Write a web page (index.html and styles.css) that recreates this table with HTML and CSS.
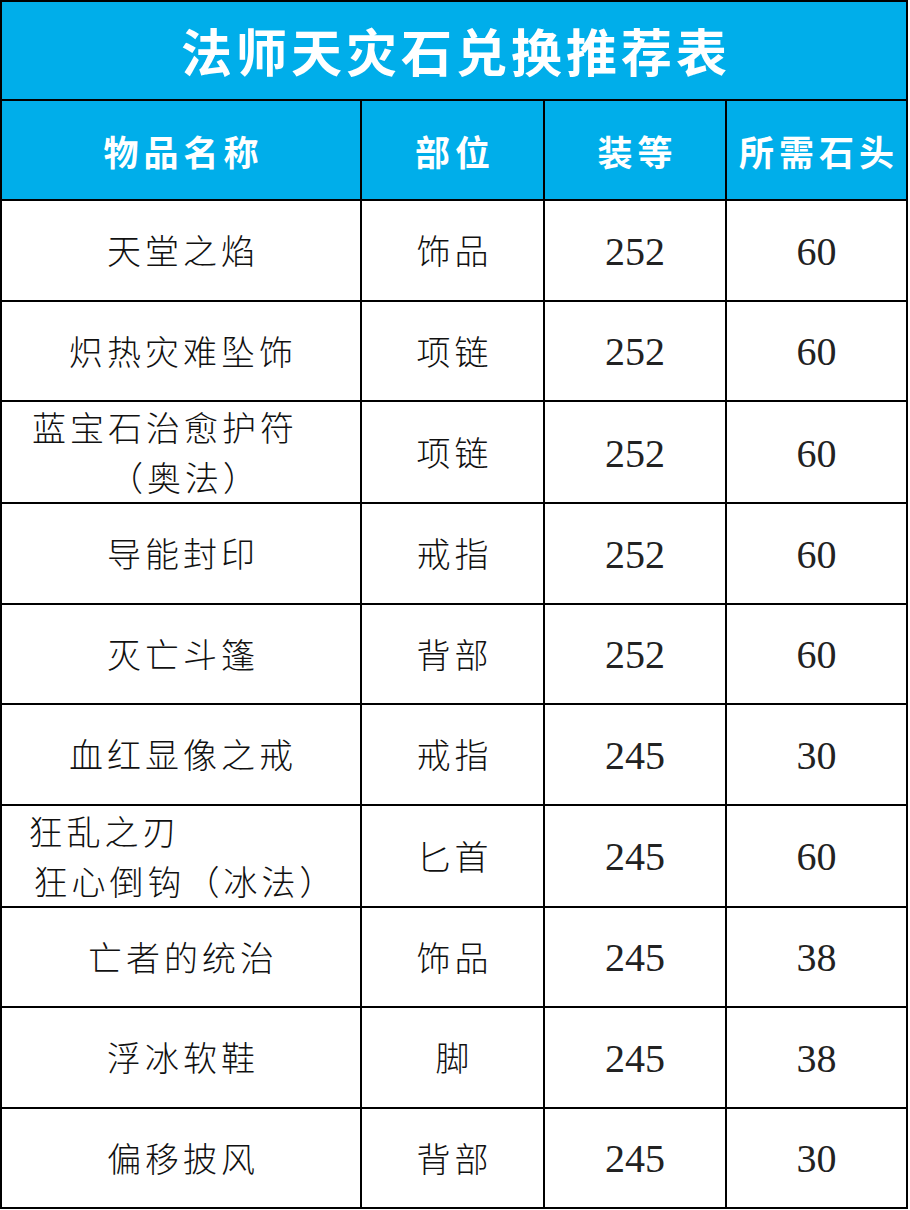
FILE: index.html
```html
<!DOCTYPE html>
<html lang="zh-CN">
<head>
<meta charset="utf-8">
<title>法师天灾石兑换推荐表</title>
<link rel="stylesheet" href="styles.css">
</head>
<body>
<div class="sheet">
  <div class="title">法师天灾石兑换推荐表</div>
  <div class="hd">物品名称</div>
  <div class="hd">部位</div>
  <div class="hd">装等</div>
  <div class="hd">所需石头</div>

  <div class="cell name">天堂之焰</div><div class="cell">饰品</div><div class="cell num">252</div><div class="cell num">60</div>
  <div class="cell name">炽热灾难坠饰</div><div class="cell">项链</div><div class="cell num">252</div><div class="cell num">60</div>
  <div class="cell name"><div class="two center"><span class="l1">蓝宝石治愈护符</span><span class="l2">（奥法）</span></div></div><div class="cell">项链</div><div class="cell num">252</div><div class="cell num">60</div>
  <div class="cell name">导能封印</div><div class="cell">戒指</div><div class="cell num">252</div><div class="cell num">60</div>
  <div class="cell name">灭亡斗篷</div><div class="cell">背部</div><div class="cell num">252</div><div class="cell num">60</div>
  <div class="cell name">血红显像之戒</div><div class="cell">戒指</div><div class="cell num">245</div><div class="cell num">30</div>
  <div class="cell name"><div class="two left"><span>狂乱之刃</span><span class="ind">狂心倒钩（冰法）</span></div></div><div class="cell">匕首</div><div class="cell num">245</div><div class="cell num">60</div>
  <div class="cell name">亡者的统治</div><div class="cell">饰品</div><div class="cell num">245</div><div class="cell num">38</div>
  <div class="cell name">浮冰软鞋</div><div class="cell">脚</div><div class="cell num">245</div><div class="cell num">38</div>
  <div class="cell name">偏移披风</div><div class="cell">背部</div><div class="cell num">245</div><div class="cell num">30</div>
</div>
</body>
</html>
```
FILE: styles.css
```css
html, body {
  margin: 0;
  padding: 0;
  background: #ffffff;
}
.sheet {
  box-sizing: border-box;
  width: 908px;
  height: 1209px;
  border: 2px solid #000;
  background: #000;
  display: grid;
  grid-template-columns: 358px 181px 180px 1fr;
  grid-template-rows: 97px 98px repeat(10, 1fr);
  gap: 2px;
  font-family: "Noto Sans CJK SC", "Noto Sans", sans-serif;
}
.title {
  grid-column: 1 / -1;
  background: #00aeea;
  color: #fff;
  font-size: 51px;
  font-weight: 700;
  letter-spacing: 4px;
  padding-left: 4px;
  display: flex;
  align-items: center;
  justify-content: center;
  line-height: 1;
}
.hd {
  background: #00aeea;
  color: #fff;
  font-size: 35px;
  font-weight: 700;
  letter-spacing: 5px;
  padding-left: 5px;
  display: flex;
  align-items: center;
  justify-content: center;
  line-height: 1;
}
.cell {
  background: #fff;
  color: #111;
  font-size: 34px;
  font-weight: 300;
  letter-spacing: 4px;
  padding-left: 4px;
  display: flex;
  align-items: center;
  justify-content: center;
  line-height: 1;
}
.num {
  font-family: "Liberation Serif", "Times New Roman", "DejaVu Serif", serif;
  font-size: 40px;
  font-weight: 400;
  letter-spacing: 0;
  padding-left: 0;
  padding-top: 3px;
  color: #222;
}
.two {
  display: flex;
  flex-direction: column;
  line-height: 50px;
}
.two.center {
  align-items: center;
}
.two.left {
  align-items: flex-start;
}
.l1 {
  margin-right: 36px;
}
.l2 {
  margin-left: 4px;
}
.ind {
  padding-left: 5px;
}
```
